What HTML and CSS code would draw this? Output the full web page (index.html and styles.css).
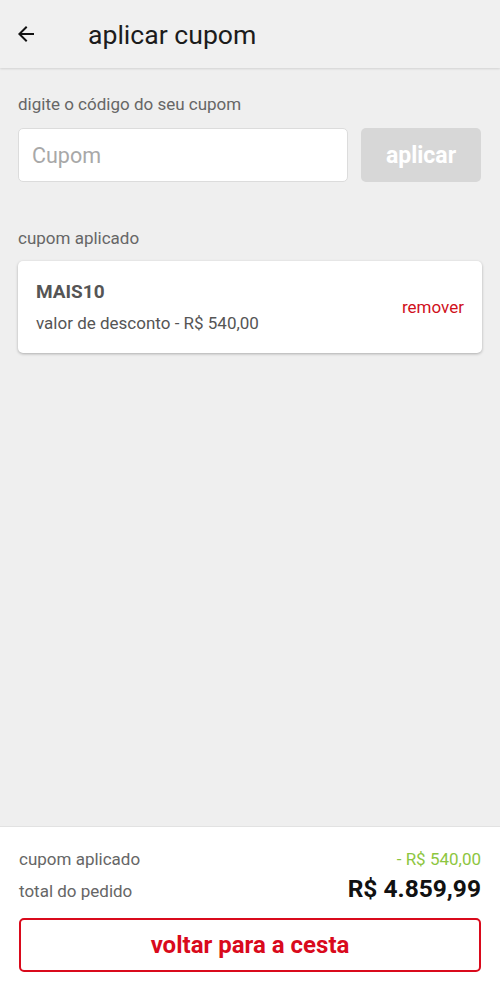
FILE: index.html
```html
<!DOCTYPE html>
<html lang="pt">
<head>
<meta charset="utf-8">
<link rel="stylesheet" href="styles.css">
</head>
<body>
<div class="app">
  <header class="topbar">
    <svg class="back" width="24" height="24" viewBox="0 0 24 24"><path d="M20 11H7.83l5.59-5.59L12 4l-8 8 8 8 1.41-1.41L7.83 13H20v-2z" fill="#111"/></svg>
    <h1 class="title">aplicar cupom</h1>
  </header>
  <main class="content">
    <p class="label">digite o código do seu cupom</p>
    <div class="coupon-form">
      <input class="coupon-input" type="text" placeholder="Cupom">
      <button class="apply-btn">aplicar</button>
    </div>
    <p class="label label-applied">cupom aplicado</p>
    <div class="card">
      <div class="card-info">
        <div class="code">MAIS10</div>
        <div class="discount">valor de desconto - R$ 540,00</div>
      </div>
      <span class="remove">remover</span>
    </div>
  </main>
  <footer class="footer">
    <div class="row">
      <span class="row-label">cupom aplicado</span>
      <span class="row-discount">- R$ 540,00</span>
    </div>
    <div class="row row-total">
      <span class="row-label">total do pedido</span>
      <span class="total">R$ 4.859,99</span>
    </div>
    <button class="back-btn">voltar para a cesta</button>
  </footer>
</div>
</body>
</html>
```
FILE: styles.css
```css
* { box-sizing: border-box; }
html, body { margin: 0; padding: 0; }
body {
  font-family: Roboto, "Noto Sans", sans-serif;
  background: #efefef;
  width: 500px;
  height: 998px;
  overflow: hidden;
}
.app {
  display: flex;
  flex-direction: column;
  height: 998px;
}
.topbar {
  height: 68px;
  flex: none;
  display: flex;
  align-items: center;
  padding-left: 14px;
  background: #f0f0f0;
  box-shadow: 0 1px 2px rgba(0,0,0,0.12);
  position: relative;
  z-index: 1;
}
.back { flex: none; }
.title {
  margin: 0 0 0 50px;
  font-size: 26.6px;
  font-weight: 400;
  color: #1c1c1c;
}
.content {
  flex: 1;
  padding: 0 18px;
}
.label {
  margin: 0;
  font-size: 17px;
  color: #666;
  line-height: 20px;
}
.content .label:first-child { padding-top: 26px; }
.coupon-form {
  display: flex;
  gap: 13px;
  margin-top: 14px;
}
.coupon-input {
  width: 330px;
  height: 54px;
  border: 1px solid #dcdcdc;
  border-radius: 5px;
  background: #fff;
  padding: 0 13px;
  font-family: Roboto, sans-serif;
  font-size: 21.5px;
  color: #333;
  outline: none;
}
.coupon-input::placeholder { color: #a8a8a8; }
.apply-btn {
  flex: 1;
  height: 54px;
  border: none;
  border-radius: 5px;
  background: #d7d7d7;
  color: #fff;
  font-family: Roboto, sans-serif;
  font-size: 23px;
  font-weight: 700;
  padding: 0;
  margin-right: 1px;
}
.content .label-applied { margin-top: 46px; }
.card {
  margin-top: 13px;
  height: 92px;
  width: 464px;
  background: #fff;
  border-radius: 5px;
  box-shadow: 0 1px 3px rgba(0,0,0,0.28);
  display: flex;
  align-items: center;
  justify-content: space-between;
  padding: 0 18px;
}
.code {
  font-size: 19px;
  font-weight: 700;
  color: #555;
  line-height: 22px;
}
.discount {
  margin-top: 10px;
  font-size: 17px;
  color: #555;
  line-height: 20px;
}
.remove {
  color: #d0101b;
  font-size: 17px;
}
.footer {
  flex: none;
  height: 172px;
  background: #fff;
  border-top: 1px solid #e2e2e2;
  padding: 22px 19px 0 19px;
}
.row {
  display: flex;
  justify-content: space-between;
  align-items: baseline;
  height: 24px;
}
.row-label {
  font-size: 17px;
  color: #666;
}
.row-discount {
  font-size: 17px;
  color: #8dc63f;
}
.row-total { margin-top: 1px; height: 28px; }
.total {
  font-size: 24.5px;
  font-weight: 700;
  color: #111;
}
.back-btn {
  margin-top: 16px;
  width: 100%;
  height: 54px;
  background: #fff;
  border: 2px solid #d90a1c;
  border-radius: 5px;
  color: #d90a1c;
  font-family: Roboto, sans-serif;
  font-size: 24px;
  font-weight: 700;
  padding: 0;
}
```
